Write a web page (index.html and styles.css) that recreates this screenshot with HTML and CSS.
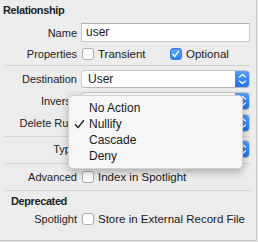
FILE: index.html
```html
<!DOCTYPE html>
<html>
<head>
<meta charset="utf-8">
<link rel="stylesheet" href="styles.css">
</head>
<body>
<div class="panel">
  <div class="heading">Relationship</div>

  <div class="row row-name">
    <div class="label">Name</div>
    <div class="field">user</div>
  </div>

  <div class="row row-check">
    <div class="label">Properties</div>
    <span class="option option-first"><span class="checkbox"></span><span class="ctext">Transient</span></span>
    <span class="option"><span class="checkbox checked"><svg width="12" height="12" viewBox="0 0 12 12"><polyline points="3,6.3 5.2,8.6 9,3.4" fill="none" stroke="#fff" stroke-width="1.7" stroke-linecap="round" stroke-linejoin="round"/></svg></span><span class="ctext">Optional</span></span>
  </div>

  <div class="sep sep-a"></div>

  <div class="row row-pop">
    <div class="label">Destination</div>
    <div class="popup"><span class="ptext">User</span><span class="stepper"><svg width="15" height="18" viewBox="0 0 15 18"><polyline points="4.5,7 7.5,4.5 10.5,7" fill="none" stroke="#fff" stroke-width="1.3" stroke-linecap="round" stroke-linejoin="round"/><polyline points="4.5,11 7.5,13.5 10.5,11" fill="none" stroke="#fff" stroke-width="1.3" stroke-linecap="round" stroke-linejoin="round"/></svg></span></div>
  </div>

  <div class="row row-pop">
    <div class="label">Inverse</div>
    <div class="popup"><span class="ptext"></span><span class="stepper"><svg width="15" height="18" viewBox="0 0 15 18"><polyline points="4.5,7 7.5,4.5 10.5,7" fill="none" stroke="#fff" stroke-width="1.3" stroke-linecap="round" stroke-linejoin="round"/><polyline points="4.5,11 7.5,13.5 10.5,11" fill="none" stroke="#fff" stroke-width="1.3" stroke-linecap="round" stroke-linejoin="round"/></svg></span></div>
  </div>

  <div class="row row-pop">
    <div class="label">Delete Rule</div>
    <div class="popup"><span class="ptext"></span><span class="stepper"><svg width="15" height="18" viewBox="0 0 15 18"><polyline points="4.5,7 7.5,4.5 10.5,7" fill="none" stroke="#fff" stroke-width="1.3" stroke-linecap="round" stroke-linejoin="round"/><polyline points="4.5,11 7.5,13.5 10.5,11" fill="none" stroke="#fff" stroke-width="1.3" stroke-linecap="round" stroke-linejoin="round"/></svg></span></div>
  </div>

  <div class="sep sep-b"></div>

  <div class="row row-pop row-type">
    <div class="label">Type</div>
    <div class="popup"><span class="ptext"></span><span class="stepper"><svg width="15" height="18" viewBox="0 0 15 18"><polyline points="4.5,7 7.5,4.5 10.5,7" fill="none" stroke="#fff" stroke-width="1.3" stroke-linecap="round" stroke-linejoin="round"/><polyline points="4.5,11 7.5,13.5 10.5,11" fill="none" stroke="#fff" stroke-width="1.3" stroke-linecap="round" stroke-linejoin="round"/></svg></span></div>
  </div>

  <div class="sep sep-c"></div>

  <div class="row row-check row-adv">
    <div class="label">Advanced</div>
    <span class="option"><span class="checkbox"></span><span class="ctext">Index in Spotlight</span></span>
  </div>

  <div class="sep sep-d"></div>

  <div class="heading heading-2">Deprecated</div>

  <div class="row row-check row-spot">
    <div class="label">Spotlight</div>
    <span class="option"><span class="checkbox"></span><span class="ctext">Store in External Record File</span></span>
  </div>

  <div class="menu">
    <div class="item">No Action</div>
    <div class="item selected"><svg class="tick" width="11" height="11" viewBox="0 0 11 11"><polyline points="1.5,5.8 4,8.6 9.5,1.8" fill="none" stroke="#1a1a1a" stroke-width="1.4" stroke-linecap="round" stroke-linejoin="round"/></svg>Nullify</div>
    <div class="item">Cascade</div>
    <div class="item">Deny</div>
  </div>
</div>
</body>
</html>
```

FILE: styles.css
```css
html, body {
  margin: 0;
  padding: 0;
  background: #ececec;
}

.panel {
  position: relative;
  width: 257px;
  height: 241px;
  box-sizing: border-box;
  border-right: 1px solid #c4c4c4;
  border-bottom: 1px solid #c4c4c4;
  background: #ececec;
  font-family: "Liberation Sans", Arial, sans-serif;
  font-size: 11px;
  color: #222;
  display: flex;
  flex-direction: column;
}

.heading {
  font-weight: bold;
  letter-spacing: -0.4px;
  padding-left: 3px;
  margin-top: 4px;
  height: 12px;
  line-height: 12px;
  color: #1e1e1e;
}

.heading-2 {
  margin-top: 4px;
  padding-left: 11px;
}

.row {
  display: flex;
  align-items: center;
}

.label {
  width: 81px;
  flex: none;
  box-sizing: border-box;
  padding-right: 4px;
  text-align: right;
  white-space: nowrap;
}

.row-name {
  margin-top: 7px;
  height: 19px;
}

.field {
  width: 169px;
  height: 19px;
  box-sizing: border-box;
  background: #fff;
  border: 1px solid #c6c6c6;
  border-top-color: #b4b4b4;
  padding-left: 4px;
  line-height: 17px;
  font-size: 12px;
  color: #1a1a1a;
}

.row-check {
  margin-top: 5px;
  height: 14px;
}

.option {
  display: flex;
  align-items: center;
}

.option-first {
  width: 88px;
  flex: none;
}

.checkbox {
  flex: none;
  width: 12px;
  height: 12px;
  box-sizing: border-box;
  margin-left: 1px;
  border: 1px solid #adadad;
  border-radius: 3px;
  background: #fff;
  display: flex;
}

.checkbox.checked {
  background: linear-gradient(#5aa2fb, #2f83f6);
  border-color: #2f7ce8;
}

.checkbox.checked svg {
  margin: -1px 0 0 -1px;
}

.ctext {
  margin-left: 4px;
  white-space: nowrap;
  font-size: 11.5px;
  color: #1a1a1a;
}

.sep {
  height: 1px;
  background: #d3d3d3;
  margin-left: 5px;
  margin-right: 6px;
}

.sep-a { margin-top: 4px; }
.sep-b { margin-top: 4px; }
.sep-c { margin-top: 5px; }
.sep-d { margin-top: 6px; }

.row-pop {
  margin-top: 4px;
  height: 18px;
}

.row-type {
  margin-top: 3px;
}

.row-adv {
  margin-top: 6px;
}

.row-spot {
  margin-top: 5px;
}

.popup {
  width: 169px;
  height: 18px;
  box-sizing: border-box;
  display: flex;
  align-items: center;
  background: #fff;
  border: 1px solid #c8c8c8;
  border-bottom-color: #b5b5b5;
  border-radius: 4px;
  overflow: hidden;
}

.ptext {
  flex: 1;
  padding-left: 6px;
  font-size: 12px;
  color: #1a1a1a;
}

.stepper {
  width: 15px;
  height: 18px;
  flex: none;
  margin-right: -1px;
  background: linear-gradient(#5aa1fb, #1b6ff5);
  display: flex;
}

.menu {
  position: absolute;
  left: 68px;
  top: 95px;
  width: 175px;
  box-sizing: border-box;
  padding: 4px 0;
  background: #f6f6f6;
  border: 1px solid #d2d2d2;
  border-radius: 5px;
  box-shadow: 0 3px 9px rgba(0, 0, 0, 0.28);
  font-size: 12px;
  color: #1a1a1a;
}

.item {
  position: relative;
  height: 16px;
  line-height: 16px;
  padding-left: 20px;
}

.tick {
  position: absolute;
  left: 5px;
  top: 3px;
}
```
